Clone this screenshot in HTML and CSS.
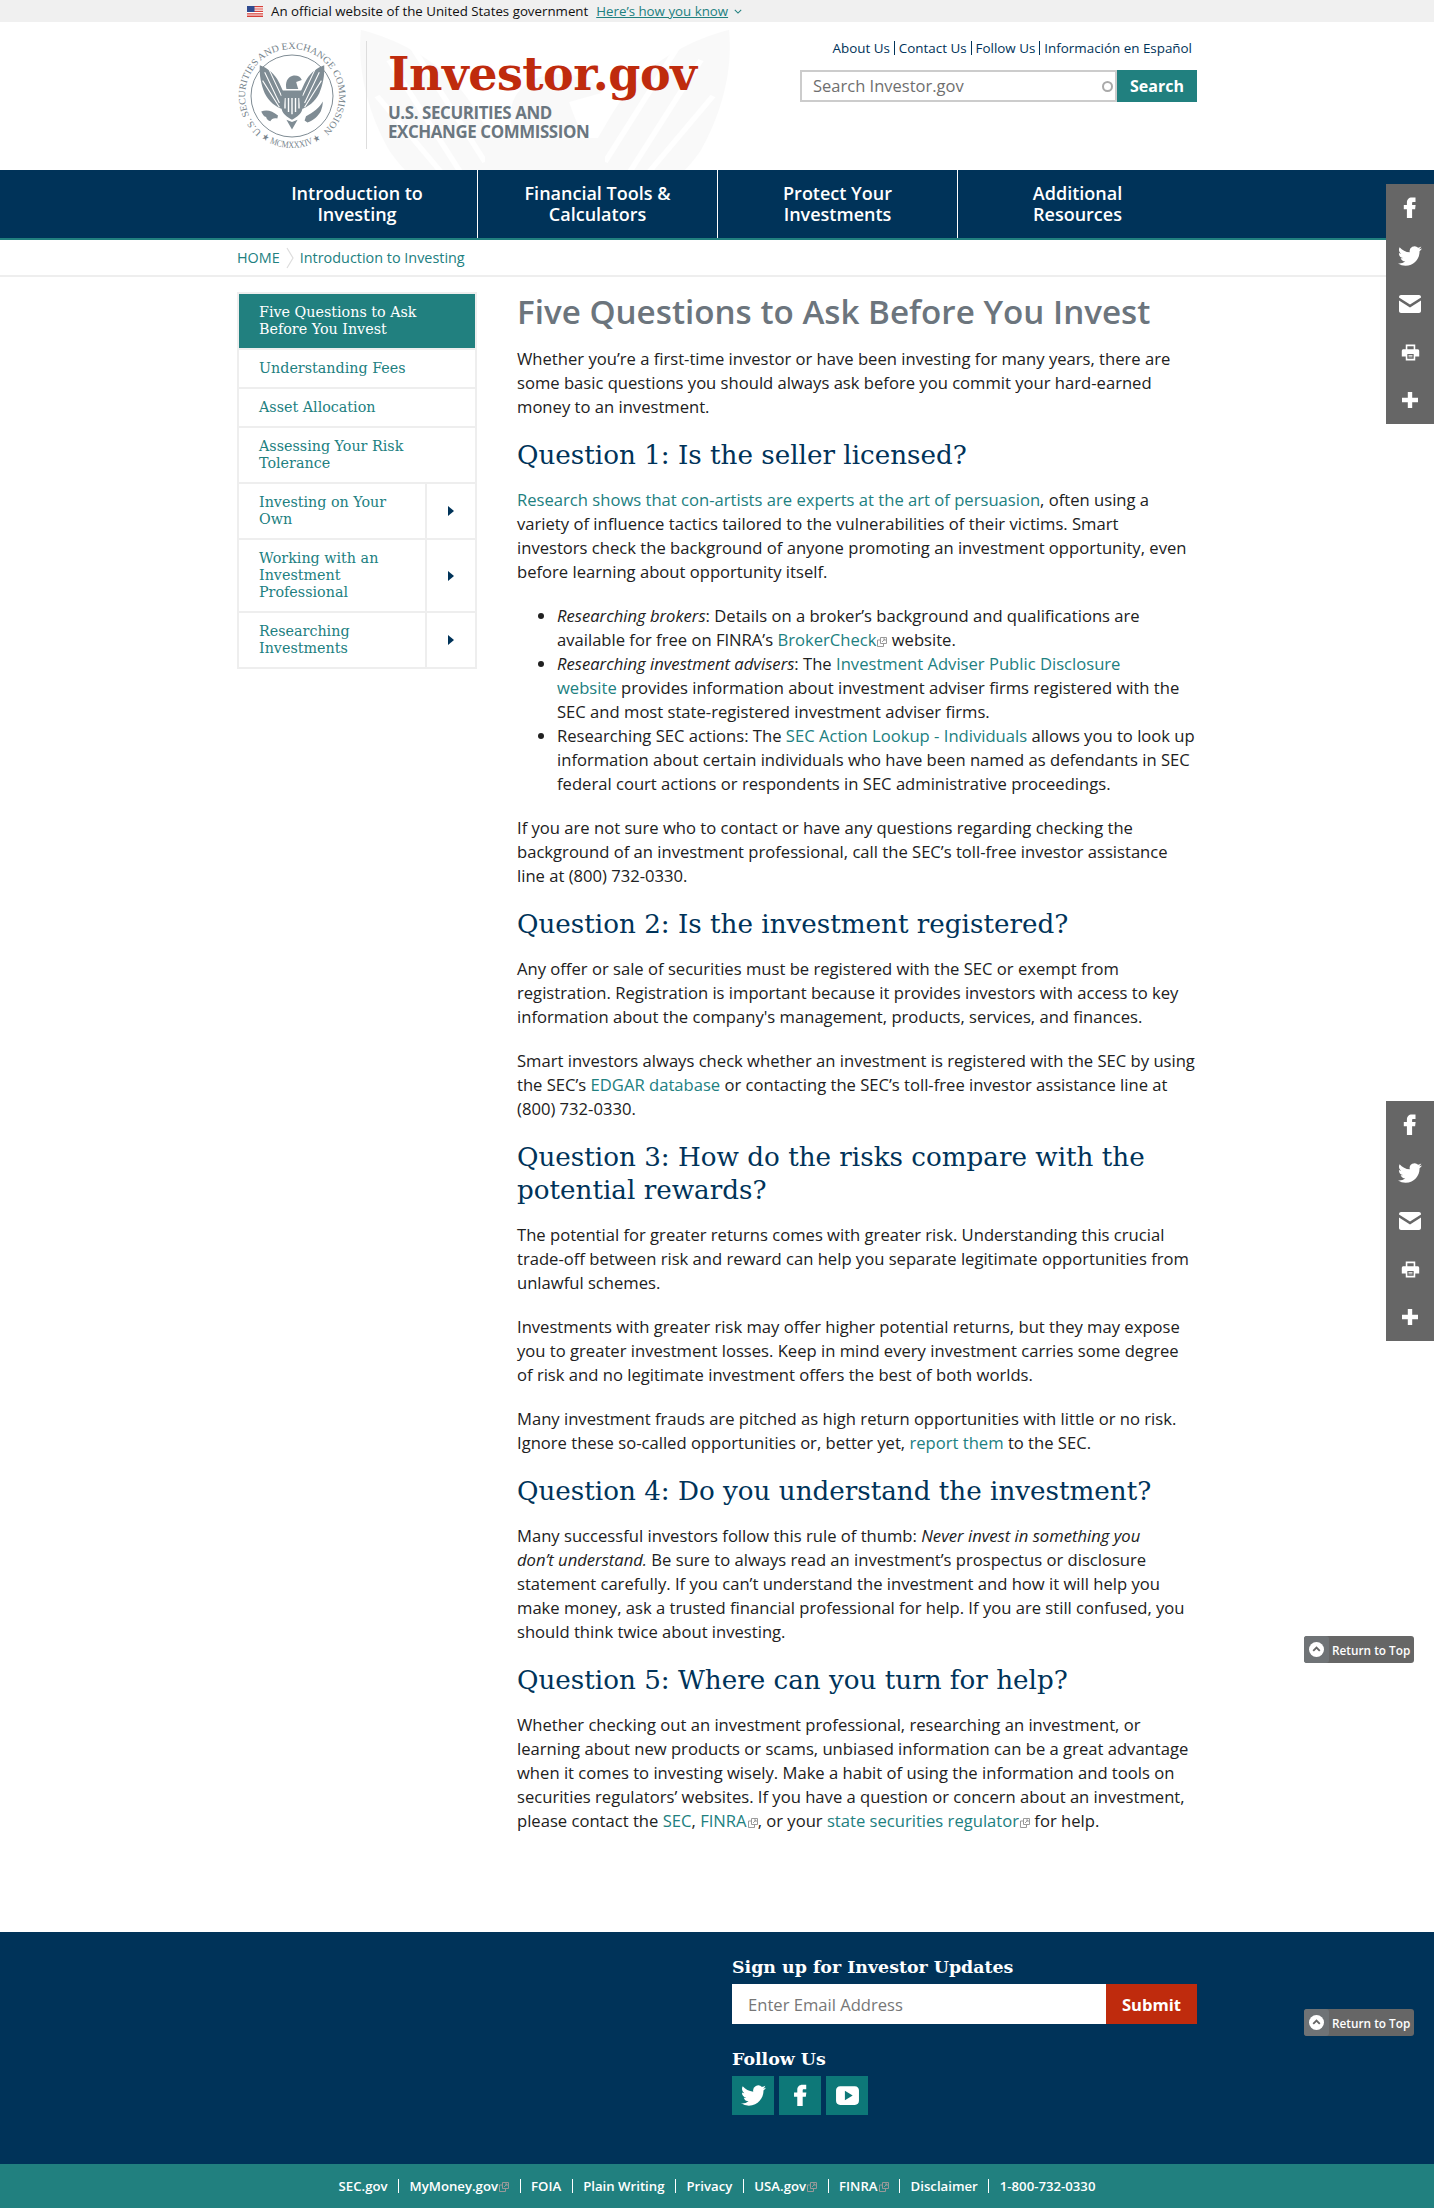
FILE: index.html
```html
<!DOCTYPE html>
<html lang="en">
<head>
    <meta charset="UTF-8">
    <meta name="viewport" content="width=device-width, initial-scale=1.0">
    <title>Five Questions to Ask Before You Invest | Investor.gov</title>
    <link rel="stylesheet" href="styles.css">
</head>
<body>
    <svg class="sprites" width="0" height="0" aria-hidden="true">
        <symbol id="i-fb" viewBox="0 2 24 24"><path d="M14.2 8h3.3V3.6h-3.6c-3.2 0-5 2.1-5 5V11H5.8v4.2h3.1V24h5.2v-8.8h3l.5-4.2h-3.5V9.2c0-.8.3-1.2 1.1-1.2z"/></symbol>
        <symbol id="i-tw" viewBox="0 0 24 24"><path d="M23.953 4.57a10 10 0 01-2.825.775 4.958 4.958 0 002.163-2.723c-.951.555-2.005.959-3.127 1.184a4.92 4.92 0 00-8.384 4.482C7.69 8.095 4.067 6.13 1.64 3.162a4.822 4.822 0 00-.666 2.475c0 1.71.87 3.213 2.188 4.096a4.904 4.904 0 01-2.228-.616v.06a4.923 4.923 0 003.946 4.827 4.996 4.996 0 01-2.212.085 4.936 4.936 0 004.604 3.417 9.867 9.867 0 01-6.102 2.105c-.39 0-.779-.023-1.17-.067a13.995 13.995 0 007.557 2.209c9.053 0 13.998-7.496 13.998-13.985 0-.21 0-.42-.015-.63A9.935 9.935 0 0024 4.59z"/></symbol>
        <symbol id="i-mail" viewBox="0 0 24 24"><path d="M3 3h18c1 0 2 .8 2 2v.6l-11 7L1 5.600V5c0-1.200 1-2 2-2zM1 8.600l11 7 11-7V19c0 1.200-1 2-2 2H3c-1 0-2-.8-2-2z"/></symbol>
        <symbol id="i-print" viewBox="0 0 24 24"><path fill-rule="evenodd" d="M6 2h12v6h3c1 0 2 .9 2 2v7h-5v5H6v-5H1v-7c0-1.100 1-2 2-2h3zm2 2v4h8V4zm0 10v6h8v-6zm1.500 1h5v1h-5zm0 2h5v1h-5z"/></symbol>
        <symbol id="i-plus" viewBox="0 0 24 24"><path d="M9.800 4h4.400v5.800H20v4.400h-5.800V20H9.800v-5.800H4V9.800h5.800z"/></symbol>
        <symbol id="i-yt" viewBox="0 0 24 24"><path fill-rule="evenodd" d="M5 3h14c2.500 0 4 1.600 4 4v10c0 2.400-1.500 4-4 4H5c-2.500 0-4-1.600-4-4V7c0-2.400 1.500-4 4-4zm4.500 4.500v9l7.500-4.500z"/></symbol>
        <symbol id="i-ext" viewBox="0 0 10 10"><path fill="none" stroke="currentColor" stroke-width="1" d="M3.500 .5h6v6h-6zM3.500 3H.5v6.500h6V6.500M5 5l3-3M6 2h2v2"/></symbol>
        <symbol id="eagle" viewBox="0 0 100 100">
            <path d="M4 6c9 3 19 10 25 20 5 8 7 16 11 22l-2 21c-11-3-21-11-27-23C6 34 3 20 4 6zM96 6c-9 3-19 10-25 20-5 8-7 16-11 22l2 21c11-3 21-11 27-23 5-12 8-26 7-40z"/>
            <path d="M11 16l21 44M8 28l24 38M17 12l18 38M89 16L68 60M92 28L68 66M83 12L65 50" fill="none" stroke="#fff" stroke-width="1.500"/>
            <path d="M42 40c-2-9 1-17 9-19 6-1 11 1 13 6l-8 3c1 4 2 7 3 10z"/>
            <path fill-rule="evenodd" d="M35 42h30v24c0 9-8 14-15 18-7-4-15-9-15-18zm4 11v15h2V53zm5 0v20h2V53zm5 0v23h2V53zm5 0v20h2V53zm5 0v15h2V53z"/>
            <path d="M42 84l8 14 8-14-8 3z"/>
            <path d="M6 72c8-3 16-1 24 6l-1 4c-5-1-8 0-10 4-4-1-5-3-6-6-3 0-5-4-7-8zM94 58c-4 8-14 16-24 21l-2 6 4 3c8-3 15-9 19-16 2-5 3-9 3-14z"/>
        </symbol>
    </svg>

    <div class="gov-banner">
        <div class="wrap gov-inner">
            <svg class="flag" viewBox="0 0 16 11">
                <rect width="16" height="11" fill="#fff"/>
                <path d="M0 0h16v1.200H0zM0 2.400h16v1.200H0zM0 4.800h16V6H0zM0 7.200h16v1.200H0zM0 9.600h16V11H0z" fill="#d6403a"/>
                <rect width="7.500" height="6" fill="#2f4a8f"/>
            </svg>
            <span class="gov-text">An official website of the United States government</span>
            <a class="gov-link" href="#">Here’s how you know</a>
            <svg class="gov-caret" viewBox="0 0 10 6"><path d="M1 1l4 4 4-4" fill="none" stroke="#21807f" stroke-width="1.300"/></svg>
        </div>
    </div>

    <header class="site-header">
        <svg class="watermark" viewBox="0 0 100 100" preserveAspectRatio="none"><use href="#eagle"/></svg>
        <div class="wrap header-inner">
            <a class="brand" href="#">
                <svg class="seal" viewBox="0 0 110 110">
                    <defs>
                        <path id="seal-top" d="M24.800 91A47 47 0 1 1 85.200 91"/>
                        <path id="seal-bottom" d="M24.400 97.100A52 52 0 0 0 85.600 97.100"/>
                    </defs>
                    <circle cx="55" cy="55" r="41" fill="none" stroke="#7f8c94" stroke-width="1"/>
                    <text class="seal-text"><textPath href="#seal-top" textLength="228" lengthAdjust="spacingAndGlyphs">U.S. SECURITIES AND EXCHANGE COMMISSION</textPath></text>
                    <text class="seal-text"><textPath href="#seal-bottom" textLength="64" lengthAdjust="spacingAndGlyphs">★ MCMXXXIV ★</textPath></text>
                    <svg x="20" y="20" width="70" height="70" viewBox="0 0 100 100" class="seal-eagle"><use href="#eagle"/></svg>
                </svg>
                <div class="brand-text">
                    <div class="brand-name">Investor.gov</div>
                    <div class="brand-sub">U.S. SECURITIES AND<br>EXCHANGE COMMISSION</div>
                </div>
            </a>
            <div class="header-right">
                <ul class="top-links">
                    <li><a href="#">About Us</a></li>
                    <li><a href="#">Contact Us</a></li>
                    <li><a href="#">Follow Us</a></li>
                    <li><a href="#">Información en Español</a></li>
                </ul>
                <form class="search">
                    <div class="search-box">
                        <input type="text" placeholder="Search Investor.gov">
                        <span class="search-dot"></span>
                    </div>
                    <button type="button">Search</button>
                </form>
            </div>
        </div>
    </header>

    <nav class="main-nav">
        <div class="wrap nav-inner">
            <a href="#">Introduction to<br>Investing</a>
            <a href="#">Financial Tools &amp;<br>Calculators</a>
            <a href="#">Protect Your<br>Investments</a>
            <a href="#">Additional<br>Resources</a>
        </div>
    </nav>

    <div class="breadcrumb">
        <div class="wrap crumb-inner">
            <a href="#">HOME</a>
            <svg class="crumb-sep" viewBox="0 0 8 22"><path d="M1 1l6 10-6 10" fill="none" stroke="#ddd" stroke-width="1.200"/></svg>
            <a href="#">Introduction to Investing</a>
        </div>
    </div>

    <div class="wrap page">
        <aside class="side-nav">
            <a class="side-item active" href="#"><span class="side-label">Five Questions to Ask<br>Before You Invest</span></a>
            <a class="side-item" href="#"><span class="side-label">Understanding Fees</span></a>
            <a class="side-item" href="#"><span class="side-label">Asset Allocation</span></a>
            <a class="side-item" href="#"><span class="side-label">Assessing Your Risk<br>Tolerance</span></a>
            <a class="side-item" href="#"><span class="side-label">Investing on Your<br>Own</span><span class="side-arrow"></span></a>
            <a class="side-item" href="#"><span class="side-label">Working with an<br>Investment<br>Professional</span><span class="side-arrow"></span></a>
            <a class="side-item" href="#"><span class="side-label">Researching<br>Investments</span><span class="side-arrow"></span></a>
        </aside>

        <main class="content">
            <h1>Five Questions to Ask Before You Invest</h1>
            <p>Whether you’re a first-time investor or have been investing for many years, there are some basic questions you should always ask before you commit your hard-earned money to an investment.</p>

            <h2>Question 1: Is the seller licensed?</h2>
            <p><a href="#">Research shows that con-artists are experts at the art of persuasion</a>, often using a variety of influence tactics tailored to the vulnerabilities of their victims. Smart<br>investors check the background of anyone promoting an investment opportunity, even<br>before learning about opportunity itself.</p>
            <ul>
                <li><em>Researching brokers</em>: Details on a broker’s background and qualifications are available for free on FINRA’s <a href="#">BrokerCheck<svg class="ext"><use href="#i-ext"/></svg></a> website.</li>
                <li><em>Researching investment advisers</em>: The <a href="#">Investment Adviser Public Disclosure<br>website</a> provides information about investment adviser firms registered with the<br>SEC and most state-registered investment adviser firms.</li>
                <li>Researching SEC actions: The <a href="#">SEC Action Lookup - Individuals</a> allows you to look up information about certain individuals who have been named as defendants in SEC federal court actions or respondents in SEC administrative proceedings.</li>
            </ul>
            <p>If you are not sure who to contact or have any questions regarding checking the background of an investment professional, call the SEC’s toll-free investor assistance line at (800) 732-0330.</p>

            <h2>Question 2: Is the investment registered?</h2>
            <p>Any offer or sale of securities must be registered with the SEC or exempt from registration. Registration is important because it provides investors with access to key information about the company's management, products, services, and finances.</p>
            <p>Smart investors always check whether an investment is registered with the SEC by using the SEC’s <a href="#">EDGAR database</a> or contacting the SEC’s toll-free investor assistance line at (800) 732-0330.</p>

            <h2>Question 3: How do the risks compare with the potential rewards?</h2>
            <p>The potential for greater returns comes with greater risk. Understanding this crucial trade-off between risk and reward can help you separate legitimate opportunities from unlawful schemes.</p>
            <p>Investments with greater risk may offer higher potential returns, but they may expose you to greater investment losses. Keep in mind every investment carries some degree of risk and no legitimate investment offers the best of both worlds.</p>
            <p>Many investment frauds are pitched as high return opportunities with little or no risk. Ignore these so-called opportunities or, better yet, <a href="#">report them</a> to the SEC.</p>

            <h2>Question 4: Do you understand the investment?</h2>
            <p>Many successful investors follow this rule of thumb: <em>Never invest in something you<br>don’t understand.</em> Be sure to always read an investment’s prospectus or disclosure<br>statement carefully. If you can’t understand the investment and how it will help you<br>make money, ask a trusted financial professional for help. If you are still confused, you<br>should think twice about investing.</p>

            <h2>Question 5: Where can you turn for help?</h2>
            <p>Whether checking out an investment professional, researching an investment, or learning about new products or scams, unbiased information can be a great advantage when it comes to investing wisely. Make a habit of using the information and tools on securities regulators’ websites. If you have a question or concern about an investment, please contact the <a href="#">SEC</a>, <a href="#">FINRA<svg class="ext"><use href="#i-ext"/></svg></a>, or your <a href="#">state securities regulator<svg class="ext"><use href="#i-ext"/></svg></a> for help.</p>
        </main>
    </div>

    <footer class="footer">
        <div class="wrap footer-inner">
            <div class="signup">
                <h3>Sign up for Investor Updates</h3>
                <form class="signup-form">
                    <input type="text" placeholder="Enter Email Address">
                    <button type="button">Submit</button>
                </form>
                <h3 class="follow-title">Follow Us</h3>
                <div class="follow-icons">
                    <a href="#"><svg><use href="#i-tw"/></svg></a>
                    <a href="#"><svg><use href="#i-fb"/></svg></a>
                    <a href="#"><svg><use href="#i-yt"/></svg></a>
                </div>
            </div>
        </div>
    </footer>
    <div class="footer-links">
        <a href="#">SEC.gov</a>
        <a href="#">MyMoney.gov<svg class="ext"><use href="#i-ext"/></svg></a>
        <a href="#">FOIA</a>
        <a href="#">Plain Writing</a>
        <a href="#">Privacy</a>
        <a href="#">USA.gov<svg class="ext"><use href="#i-ext"/></svg></a>
        <a href="#">FINRA<svg class="ext"><use href="#i-ext"/></svg></a>
        <a href="#">Disclaimer</a>
        <a href="#">1-800-732-0330</a>
    </div>

    <!-- floating widgets, these sit over the page -->
    <div class="share share-one">
        <a href="#"><svg><use href="#i-fb"/></svg></a>
        <a href="#"><svg><use href="#i-tw"/></svg></a>
        <a href="#"><svg><use href="#i-mail"/></svg></a>
        <a href="#"><svg class="small"><use href="#i-print"/></svg></a>
        <a href="#"><svg><use href="#i-plus"/></svg></a>
    </div>
    <div class="share share-two">
        <a href="#"><svg><use href="#i-fb"/></svg></a>
        <a href="#"><svg><use href="#i-tw"/></svg></a>
        <a href="#"><svg><use href="#i-mail"/></svg></a>
        <a href="#"><svg class="small"><use href="#i-print"/></svg></a>
        <a href="#"><svg><use href="#i-plus"/></svg></a>
    </div>
    <a class="to-top to-top-one" href="#"><span class="to-top-icon"><svg viewBox="0 0 16 16"><circle cx="8" cy="8" r="8" fill="#fff"/><path d="M4.500 9.500L8 6l3.500 3.500" fill="none" stroke="#666" stroke-width="2"/></svg></span>Return to Top</a>
    <a class="to-top to-top-two" href="#"><span class="to-top-icon"><svg viewBox="0 0 16 16"><circle cx="8" cy="8" r="8" fill="#fff"/><path d="M4.500 9.500L8 6l3.500 3.500" fill="none" stroke="#666" stroke-width="2"/></svg></span>Return to Top</a>
</body>
</html>
```

FILE: styles.css
```css
body {
    font-family: 'Open Sans', sans-serif;
    margin: 0;
    padding: 0;
    background-color: #fff;
    color: #212121;
    font-size: 16.62px;
    line-height: 24px;
    position: relative;
}
a {
    color: #21807f;
    text-decoration: none;
}
.sprites {
    position: absolute;
}
.wrap {
    width: 960px;
    margin: 0 auto;
}

/* gov banner */
.gov-banner {
    background-color: #f0f0f0;
    height: 22px;
}
.gov-inner {
    display: flex;
    align-items: center;
    height: 22px;
    font-size: 13.3px;
    line-height: 22px;
    color: #111;
}
.flag {
    width: 16px;
    height: 11px;
    margin: 0 8px 0 10px;
}
.gov-link {
    text-decoration: underline;
    margin-left: 8px;
}
.gov-caret {
    width: 8px;
    height: 5px;
    margin-left: 6px;
}

/* header */
.site-header {
    position: relative;
    height: 148px;
    overflow: hidden;
}
.watermark {
    position: absolute;
    left: 345px;
    top: -10px;
    width: 400px;
    height: 300px;
    fill: #000;
    opacity: 0.018;
}
.header-inner {
    display: flex;
    justify-content: space-between;
    position: relative;
}
.brand {
    display: flex;
    padding-top: 19px;
}
.seal {
    width: 110px;
    height: 110px;
    margin-right: 19px;
}
.seal-text {
    font-family: 'Liberation Serif', serif;
    font-size: 9.6px;
    fill: #76838b;
}
.seal-eagle {
    fill: #7f8c94;
}
.brand-text {
    border-left: 1px solid #ddd;
    padding-left: 21px;
    height: 108px;
}
.brand-name {
    font-family: 'DejaVu Serif', serif;
    font-weight: bold;
    font-size: 46px;
    line-height: 50px;
    color: #bf2b0d;
    margin-top: 8px;
    letter-spacing: -0.5px;
}
.brand-sub {
    font-weight: bold;
    font-size: 16.9px;
    line-height: 19px;
    color: #6b7780;
    margin-top: 4px;
    letter-spacing: -0.4px;
}
.header-right {
    display: flex;
    flex-direction: column;
    align-items: flex-end;
    width: 397px;
    padding-top: 19px;
}
.top-links {
    list-style: none;
    margin: 0 5px 0 0;
    padding: 0;
    display: flex;
    font-size: 13.4px;
    line-height: 14px;
}
.top-links li {
    padding: 0 4px;
    border-left: 1px solid #003359;
}
.top-links li:first-child {
    border-left: none;
}
.top-links li:last-child {
    padding-right: 0;
}
.top-links a {
    color: #003359;
}
.search {
    display: flex;
    width: 397px;
    height: 32px;
    margin-top: 15px;
}
.search-box {
    position: relative;
    flex: 1;
}
.search-box input {
    width: 100%;
    height: 32px;
    box-sizing: border-box;
    border: 2px solid #ccc;
    padding: 0 11px 2px;
    font-family: 'Open Sans', sans-serif;
    font-size: 16.5px;
    outline: none;
}
.search-box input::placeholder {
    color: #6f6f6f;
}
.search-dot {
    position: absolute;
    right: 4px;
    top: 11px;
    width: 7px;
    height: 7px;
    border: 2px solid #aaa;
    border-radius: 50%;
}
.search button {
    width: 80px;
    border: none;
    background-color: #21807f;
    color: #fff;
    font-family: 'Open Sans', sans-serif;
    font-weight: bold;
    font-size: 16px;
    padding: 0;
}

/* main nav */
.main-nav {
    background-color: #003359;
    border-bottom: 2px solid #21807f;
}
.nav-inner {
    display: flex;
}
.nav-inner a {
    width: 240px;
    box-sizing: border-box;
    height: 68px;
    padding-top: 13px;
    text-align: center;
    color: #fff;
    font-weight: 600;
    font-size: 18px;
    line-height: 21px;
    border-left: 1px solid #fff;
}
.nav-inner a:first-child {
    border-left: none;
}

/* breadcrumb */
.breadcrumb {
    height: 35px;
    border-bottom: 2px solid #eee;
}
.crumb-inner {
    display: flex;
    align-items: center;
    height: 35px;
    font-size: 14.4px;
}
.crumb-sep {
    width: 8px;
    height: 22px;
    margin: 0 6px;
}

/* page */
.page {
    display: flex;
    align-items: flex-start;
    padding-bottom: 79px;
}
.side-nav {
    width: 240px;
    box-sizing: border-box;
    margin-top: 15px;
    border: 2px solid #eee;
    font-family: 'DejaVu Serif', serif;
    font-size: 14.3px;
    line-height: 17px;
}
.side-item {
    display: flex;
    border-bottom: 2px solid #eee;
}
.side-item:last-child {
    border-bottom: none;
}
.side-item.active {
    background-color: #21807f;
    color: #fff;
}
.side-label {
    flex: 1;
    padding: 10px 20px;
}
.side-arrow {
    width: 48px;
    border-left: 2px solid #eee;
    display: flex;
    align-items: center;
    justify-content: center;
}
.side-arrow::before {
    content: "";
    border-left: 6px solid #003359;
    border-top: 5.500px solid transparent;
    border-bottom: 5.500px solid transparent;
}
.content {
    width: 680px;
    margin-left: 40px;
}
h1 {
    margin: 13px 0 0;
    font-size: 33.2px;
    line-height: 44px;
    font-weight: 600;
    color: #6c757d;
}
h2 {
    font-family: 'DejaVu Serif', serif;
    font-weight: normal;
    font-size: 26.2px;
    line-height: 33px;
    color: #003359;
    margin: 19px 0 0;
}
.content p {
    margin: 16px 0 20px;
}
.content h1 + p {
    margin-top: 13px;
}
.content ul {
    margin: 20px 0;
    padding-left: 40px;
}
.ext {
    width: 10px;
    height: 10px;
    margin-left: 1px;
    color: #999;
    vertical-align: -1px;
}

/* footer */
.footer {
    background-color: #003359;
    height: 232px;
    color: #fff;
}
.footer-inner {
    display: flex;
    justify-content: flex-end;
}
.signup {
    width: 465px;
    padding-top: 23px;
}
.signup h3 {
    margin: 0;
    font-family: 'DejaVu Serif', serif;
    font-weight: bold;
    font-size: 17.4px;
    line-height: 24px;
}
.signup-form {
    display: flex;
    height: 40px;
    margin-top: 5px;
}
.signup-form input {
    flex: 1;
    border: none;
    padding: 0 16px;
    font-family: 'Open Sans', sans-serif;
    font-size: 16.6px;
    outline: none;
}
.signup-form input::placeholder {
    color: #777;
}
.signup-form button {
    width: 91px;
    border: none;
    background-color: #bf2b0d;
    color: #fff;
    font-family: 'Open Sans', sans-serif;
    font-weight: bold;
    font-size: 16.6px;
    padding: 0;
}
.signup h3.follow-title {
    margin-top: 23px;
}
.follow-icons {
    display: flex;
    gap: 5px;
    margin-top: 5px;
}
.follow-icons a {
    width: 42px;
    height: 39px;
    background-color: #0d7878;
    display: flex;
    align-items: center;
    justify-content: center;
}
.follow-icons svg {
    width: 25px;
    height: 25px;
    fill: #fff;
}
.footer-links {
    background-color: #21807f;
    height: 44px;
    display: flex;
    justify-content: center;
    align-items: center;
    font-size: 13.2px;
    font-weight: 600;
    line-height: 14px;
}
.footer-links a {
    color: #fff;
    padding: 0 10.5px;
    border-left: 1px solid #fff;
}
.footer-links a:first-child {
    border-left: none;
}

/* floating widgets */
.share {
    position: absolute;
    right: 0;
    width: 48px;
    background-color: #666;
}
.share-one {
    top: 184px;
}
.share-two {
    top: 1101px;
}
.share a {
    display: flex;
    align-items: center;
    justify-content: center;
    height: 48px;
}
.share svg {
    width: 24px;
    height: 24px;
    fill: #fff;
}
.share svg.small {
    width: 19px;
    height: 19px;
}
.to-top {
    position: absolute;
    left: 1304px;
    width: 110px;
    height: 27px;
    box-sizing: border-box;
    display: flex;
    align-items: center;
    background-color: #666;
    border-radius: 3px;
    color: #fff;
    font-size: 11.8px;
    font-weight: 600;
}
.to-top-one {
    top: 1636px;
}
.to-top-two {
    top: 2009px;
}
.to-top-icon {
    width: 25px;
    height: 27px;
    display: flex;
    align-items: center;
    justify-content: center;
    background-color: #6f7376;
    border-radius: 3px;
    margin-right: 3px;
}
.to-top-icon svg {
    width: 15px;
    height: 15px;
}
```
